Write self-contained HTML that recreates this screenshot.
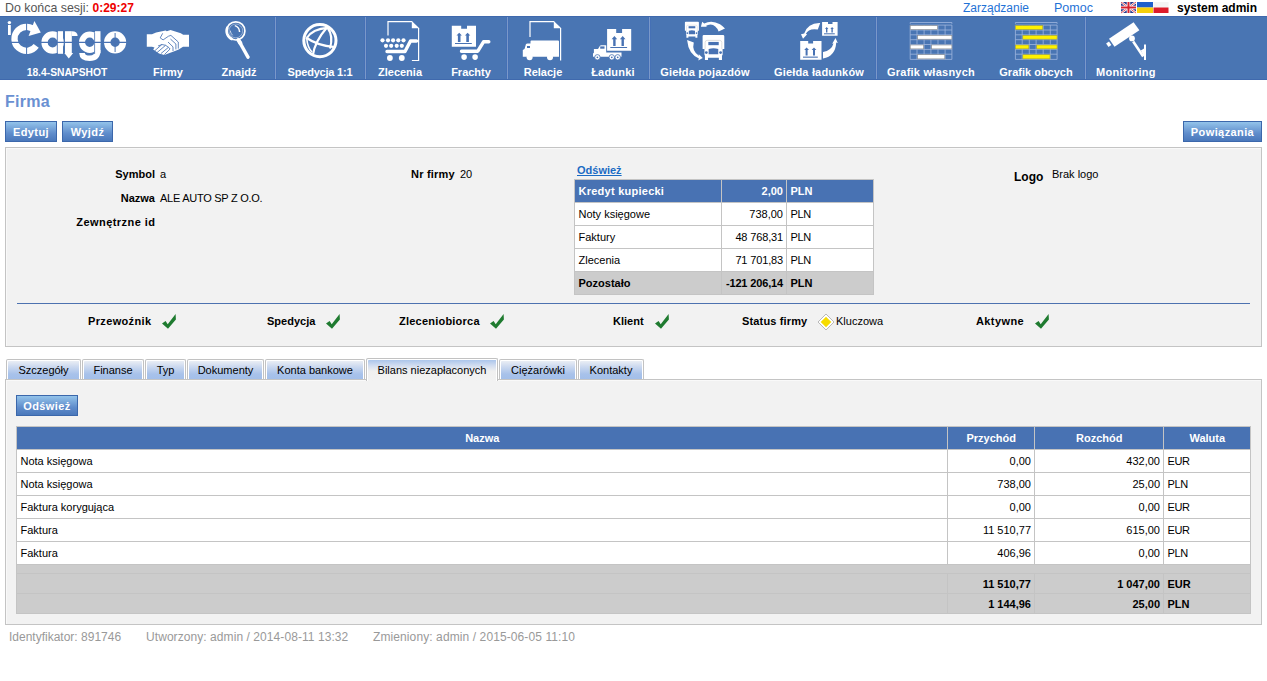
<!DOCTYPE html>
<html><head><meta charset="utf-8"><title>Firma</title>
<style>
*{box-sizing:border-box}
html,body{margin:0;padding:0;background:#fff;width:1267px;height:681px;overflow:hidden;position:relative;font-family:"Liberation Sans",sans-serif;color:#000}
.a{position:absolute;white-space:nowrap;line-height:13px}
.b{font-weight:bold}
.f11{font-size:11px}
.f12{font-size:12px}
#nav{position:absolute;left:0;top:16px;width:1267px;height:64px;background:#4975b3;box-shadow:inset 0 1px 0 #3f69ad,inset 0 -1px 0 #3f69ad}
.sep{position:absolute;top:1px;width:1px;height:62px;background:#7a98c9;box-shadow:-1px 0 0 #4570b5,1px 0 0 #4570b5}
.lbl{position:absolute;top:50px;width:140px;text-align:center;color:#fff;font-weight:bold;font-size:11px;line-height:13px;white-space:nowrap}
.btn{position:absolute;height:21px;letter-spacing:0.4px;border:1px solid #3b67ab;background:linear-gradient(#93c3ea,#5f8ccb 60%,#4a78bb);color:#fff;font-weight:bold;font-size:11px;line-height:19px;padding-top:1px;text-align:center;white-space:nowrap}
.panel{position:absolute;background:#f2f2f2;border:1px solid #c4c4c4;box-shadow:inset 1px 1px 0 #f9f9f9}
table{border-collapse:collapse;position:absolute;font-size:11px}
td,th{border:1px solid #c4c4c4;padding:0 3px 0 3.5px;height:23px;white-space:nowrap}
th{background:#4872b3;color:#fff;font-weight:bold}
.r{text-align:right}
.tab{position:absolute;top:359px;height:21px;border:1px solid #c2c2c2;border-bottom:none;border-radius:2px 2px 0 0;background:linear-gradient(#eff1f5,#cad8ef 35%,#a8c2ea 70%,#a2bee9);box-shadow:inset 1px 1px 0 #fff,inset -1px 0 0 #fff;font-size:11px;line-height:20px;text-align:center;color:#000}
.tab.act{top:358px;height:23px;line-height:22px;background:linear-gradient(#a4c1ea,#d2ddf0 30%,#f0f0f0 55%,#f2f2f2);box-shadow:inset 1px 1px 0 #fff,inset -1px 0 0 #fff;z-index:2}
.cur{letter-spacing:-0.4px}
.sum td{height:20px;background:#cccccc;font-weight:bold}
.chk{position:absolute}
</style></head><body>

<!-- top bar -->
<div class="a" style="left:5px;top:0px;font-size:12.4px;line-height:16px;color:#555">Do końca sesji: <span style="color:#e00;font-weight:bold;font-size:12px">0:29:27</span></div>
<div class="a f12" style="left:963px;top:0px;line-height:16px;color:#1f72d6">Zarządzanie</div>
<div class="a f12" style="left:1054px;top:0px;line-height:16px;color:#1f72d6;font-size:12.5px">Pomoc</div>
<div class="a f12 b" style="left:1177px;top:0px;line-height:16px;color:#000">system admin</div>
<svg style="position:absolute;left:1121px;top:2px" width="48" height="12" viewBox="0 0 48 12">
  <g>
    <rect x="0" y="0" width="15" height="11" fill="#2b3a8c"/>
    <path d="M0 0L15 11M15 0L0 11" stroke="#fff" stroke-width="2.2"/>
    <path d="M0 0L15 11M15 0L0 11" stroke="#d7222f" stroke-width="0.8"/>
    <path d="M7.5 0V11M0 5.5H15" stroke="#fff" stroke-width="3.5"/>
    <path d="M7.5 0V11M0 5.5H15" stroke="#d7222f" stroke-width="2"/>
  </g>
  <rect x="16" y="0" width="16" height="5.5" fill="#1e5fcc"/>
  <rect x="16" y="5.5" width="16" height="5.5" fill="#f6cf0a"/>
  <rect x="32.5" y="0" width="15" height="5.5" fill="#f4f4f4"/>
  <rect x="32.5" y="5.5" width="15" height="5.5" fill="#dc1c2a"/>
</svg>

<!-- nav -->
<div id="nav">
  <div class="sep" style="left:275px"></div>
  <div class="sep" style="left:365px"></div>
  <div class="sep" style="left:507px"></div>
  <div class="sep" style="left:649px"></div>
  <div class="sep" style="left:876px"></div>
  <div class="sep" style="left:1085px"></div>
  <div class="lbl" style="left:-3px;font-size:10.3px">18.4-SNAPSHOT</div>
  <div class="lbl" style="left:98px">Firmy</div>
  <div class="lbl" style="left:169px">Znajdź</div>
  <div class="lbl" style="left:250px;letter-spacing:-0.2px">Spedycja 1:1</div>
  <div class="lbl" style="left:330px">Zlecenia</div>
  <div class="lbl" style="left:401px">Frachty</div>
  <div class="lbl" style="left:473px">Relacje</div>
  <div class="lbl" style="left:543px;letter-spacing:0.2px">Ładunki</div>
  <div class="lbl" style="left:635px;letter-spacing:0.17px">Giełda pojazdów</div>
  <div class="lbl" style="left:749px;letter-spacing:0.18px">Giełda ładunków</div>
  <div class="lbl" style="left:861px;letter-spacing:0.25px">Grafik własnych</div>
  <div class="lbl" style="left:966px">Grafik obcych</div>
  <div class="lbl" style="left:1056px;letter-spacing:0.3px">Monitoring</div>
  <svg id="icons" style="position:absolute;left:0;top:0" width="1267" height="64" viewBox="0 16 1267 64">
  <g fill="#fff">
<!-- logo -->
<circle cx="9.4" cy="22.6" r="1.7"/>
<rect x="8" y="25" width="2.8" height="10"/>
<path d="M35.69 31.14 A12 12 0 1 0 36.21 45.90" fill="none" stroke="#fff" stroke-width="6.3"/>
<path d="M34.4 21 L40.8 32.6 L28.6 35.9 Z"/>
<path d="M52.6 42.5 m-8.05 0 a8.05 8.05 0 1 0 16.1 0 a8.05 8.05 0 1 0 -16.1 0" fill="none" stroke="#fff" stroke-width="6.3"/>
<rect x="57.6" y="31.2" width="5.4" height="22.6"/>
<rect x="65" y="31.2" width="6.8" height="22.8"/>
<path d="M64.4 53 L73.2 53 L68.8 58.4 Z"/>
<path d="M71.8 31.2 Q77.6 31.2 77.6 36 L71.8 36 Z"/>
<circle cx="89.7" cy="42.2" r="7.7" fill="none" stroke="#fff" stroke-width="6"/>
<rect x="95" y="31.2" width="5.5" height="22"/>
<path d="M79.2 53 Q79.5 61 89.7 61 Q100.5 61 100.5 50 L95 50 Q95 55.6 89.7 55.6 Q85.2 55.6 84.8 53 Z"/>
<circle cx="115.1" cy="42.3" r="7.9" fill="none" stroke="#fff" stroke-width="6.4"/>
<g stroke="#4872b3" fill="none">
<path d="M26.6 23 V54.5" stroke-width="1"/>
<path d="M57.3 30 V54.5" stroke-width="0.9"/>
<path d="M94.6 33 V54" stroke-width="0.8"/>
<path d="M115.1 33 V52" stroke-width="1"/>
<path d="M11 42.3 H126.8" stroke-width="1.3"/>
</g>
</g>

<!-- handshake -->
<g transform="translate(142,24)">
<path fill="#fff" d="M4.8 10.3 H10 L14.1 8.5 L23.6 6.5 L24.8 7.2 L28.5 6.1 L38.8 9.3 L41.2 10.8 H47 V22.7 H41 L36.7 25.4 L33 27 L22.3 31 L17 29.5 L11.2 25.4 L12.5 23.6 L10 22.7 H4.8 Z"/>
<g fill="none" stroke="#4872b3" stroke-width="0.85">
<path d="M20.7 9.3 L18.2 13.9 L21.1 15.9 L26.5 12.2 L28.9 11.4"/>
<path d="M28.9 11.4 L36.3 18 V24.6"/>
<path d="M28.5 15.1 L33.9 20 V25.4"/>
<path d="M26 18 L31 22.9 V27"/>
<path d="M16 22 L19.9 20.5 L12.5 27"/>
<path d="M19.9 20.5 L23.6 21.3 L14.9 28.7"/>
<path d="M23.6 21.3 L26.5 23.3 L19 29.5"/>
<path d="M26.5 23.3 L28.1 25 L22.3 30.7"/>
</g>
</g>

<!-- magnifier -->
<g transform="translate(218,18)" fill="none" stroke="#fff">
<circle cx="17.8" cy="12.9" r="9.1" stroke-width="1.7"/>
<path d="M14.5 21.4 A9 9 0 0 1 9.6 9" stroke-width="2.6"/>
<circle cx="17.8" cy="12.9" r="6.9" stroke-width="0.6" opacity="0.7"/>
<path d="M16.8 7.6 Q21.3 8.8 21.6 14" stroke-width="1.5"/>
<path d="M12.2 12.5 Q12.6 15.5 14.6 17.3" stroke-width="0.7"/>
<path d="M20.3 22 L22.4 25.2" stroke-width="4" stroke-linecap="round"/>
<path d="M21.5 24 L30 39.2" stroke-width="3.4" stroke-linecap="round"/>
</g>

<!-- globe -->
<g transform="translate(296,18)" fill="none" stroke="#fff" stroke-width="2.2">
<circle cx="23.9" cy="22.6" r="16.1" stroke-width="3"/>
<path d="M31.7 8.5 Q18.35 24 16.8 37.5"/>
<path d="M31.5 9.5 Q37.6 18 34 30.5"/>
<path d="M10 19.5 Q21 27.5 38.8 29.2"/>
<path d="M11.2 19.5 Q16.5 11 31.7 9.8"/>
<path d="M10.8 21 Q11.5 29.5 16 34" stroke-width="1.6"/>
</g>

<!-- zlecenia -->
<g transform="translate(376,18)">
<path d="M12 17.5 V3.6 H36.2 M42.6 10 V42.5 H35.9" fill="none" stroke="#fff" stroke-width="1.2"/>
<path d="M35.8 3 L43.3 10.3 L35.8 10.3 Z" fill="#fff"/>
<g fill="#fff">
<circle cx="6.5" cy="22.3" r="2.1"/><circle cx="12" cy="22.3" r="2.1"/><circle cx="17.1" cy="22.3" r="2.1"/><circle cx="22.3" cy="22.3" r="2.1"/><circle cx="27.5" cy="22.3" r="2.1"/>
<circle cx="10" cy="27.8" r="2.1"/><circle cx="15.2" cy="27.8" r="2.1"/><circle cx="20.7" cy="27.8" r="2.1"/><circle cx="25.8" cy="27.8" r="2.1"/>
<circle cx="13.9" cy="40" r="2.9"/><circle cx="25.8" cy="40" r="2.9"/>
</g>
<path d="M11 33.5 H29 L34.5 23 H40.5" fill="none" stroke="#fff" stroke-width="3.4" stroke-linecap="round" stroke-linejoin="round"/>
</g>

<!-- frachty -->
<g transform="translate(446,18)">
<path fill="#fff" d="M5.8 7.8 H15.2 V10.7 H21 V7.8 H30 V28.7 H5.8 Z"/>
<g fill="#4872b3">
<path d="M11.9 23.9 V17.6 H10.5 L13.2 14.8 L15.9 17.6 H14.5 V23.9 Z"/>
<path d="M20.3 23.9 V17.6 H18.9 L21.6 14.8 L24.3 17.6 H22.9 V23.9 Z"/>
<rect x="9" y="25" width="16.8" height="1"/>
</g>
<path d="M15.5 33.2 H31.8 L37.5 23.8 H42.8" fill="none" stroke="#fff" stroke-width="3.4" stroke-linecap="round" stroke-linejoin="round"/>
<circle cx="18.1" cy="39.1" r="2.8" fill="#fff"/><circle cx="29.1" cy="39.1" r="2.8" fill="#fff"/>
</g>

<!-- relacje -->
<g transform="translate(518,18)">
<path d="M12 19 V3.6 H36.2 M42.6 10 V42.5" fill="none" stroke="#fff" stroke-width="1.2"/>
<path d="M35.8 3 L43.3 10.3 L35.8 10.3 Z" fill="#fff"/>
<path fill="#fff" d="M12.5 23.5 Q12.5 22.6 13.5 22.6 H40 Q41 22.6 41 23.6 V38.8 H4.8 V32 L6.5 31 L8 26 Q8.5 25.5 9.5 25.5 H12.5 Z"/>
<rect x="9" y="28" width="3" height="2" fill="#4872b3"/>
<circle cx="11.6" cy="39.2" r="3" fill="#fff"/><circle cx="32" cy="39.2" r="3" fill="#fff"/>
</g>

<!-- ladunki -->
<g transform="translate(588,22)">
<path fill="#fff" d="M19.1 7 H28.2 V10.9 H34.1 V7 H43.2 V28.8 H19.1 Z"/>
<g fill="#4872b3">
<path d="M25.2 24.1 V17.3 H23.6 L26.4 14.1 L29.2 17.3 H27.6 V24.1 Z"/>
<path d="M33.5 24.1 V17.3 H31.9 L34.7 14.1 L37.5 17.3 H35.9 V24.1 Z"/>
<rect x="22.3" y="25" width="16.8" height="1"/>
</g>
<path fill="#fff" d="M5.9 27 H10 L12 23.8 Q12.4 23.2 13.2 23.2 H18.2 V30.5 H33.5 V34.7 H5 V31.5 L5.9 30.8 Z"/>
<rect x="12.2" y="24.4" width="4.3" height="2.3" fill="#4872b3"/>
<g fill="#fff" stroke="#4872b3" stroke-width="0.8">
<circle cx="9.4" cy="35.3" r="2.7"/><circle cx="23.8" cy="35.3" r="2.7"/><circle cx="29.7" cy="35.3" r="2.7"/>
</g>
<g fill="#4872b3"><circle cx="9.4" cy="35.3" r="0.9"/><circle cx="23.8" cy="35.3" r="0.9"/><circle cx="29.7" cy="35.3" r="0.9"/></g>
</g>

<!-- gielda pojazdow -->
<g transform="translate(680,18)">
<g transform="translate(4.9,3.8)"><path fill="#fff" d="M0.8 0 H13.2 Q14 0 14 0.8 V9 H12.9 V13 H12.5 V16 H10.5 V14.6 H3.5 V16 H1.5 V13 H1.2 V9 H0 V0.8 Q0 0 0.8 0 Z"/>
<rect x="3.7" y="4.4" width="6.7" height="2.1" fill="#4872b3"/>
<path d="M3.9 8.9 Q7 8 10.1 8.9 V12.4 H3.9 Z" fill="#4872b3"/>
<circle cx="2.4" cy="11.3" r="0.9" fill="#4872b3"/><circle cx="11.6" cy="11.3" r="0.9" fill="#4872b3"/>
<path d="M1.6 9 V4.8 Q1.6 3.4 3 3.4 H11 Q12.4 3.4 12.4 4.8 V9" fill="none" stroke="#dcdcdc" stroke-width="0.6"/></g>
<g transform="translate(22.6,17.1) scale(1.55)"><path fill="#fff" d="M0.8 0 H13.2 Q14 0 14 0.8 V9 H12.9 V13 H12.5 V16 H10.5 V14.6 H3.5 V16 H1.5 V13 H1.2 V9 H0 V0.8 Q0 0 0.8 0 Z"/>
<rect x="3.7" y="4.4" width="6.7" height="2.1" fill="#4872b3"/>
<path d="M3.9 8.9 Q7 8 10.1 8.9 V12.4 H3.9 Z" fill="#4872b3"/>
<circle cx="2.4" cy="11.3" r="0.9" fill="#4872b3"/><circle cx="11.6" cy="11.3" r="0.9" fill="#4872b3"/>
<path d="M1.6 9 V4.8 Q1.6 3.4 3 3.4 H11 Q12.4 3.4 12.4 4.8 V9" fill="none" stroke="#dcdcdc" stroke-width="0.6"/></g>
<path fill="#fff" d="M20.9 8.8 L22.2 3.8 L24.2 5.6 Q31.5 1.6 40 6.3 Q43 8.3 45 10.6 L38.6 13.5 Q36 6.8 30.5 6.5 Q27.8 6.6 25.8 7.9 L27.3 8.7 Z"/>
<path fill="#fff" d="M7.1 22.1 L13.8 24.6 Q11.5 33.5 19.2 38 L18.6 36 L22.8 39.9 L18.2 42.6 L18.9 40.4 Q8.5 36.5 7.1 22.1 Z"/>
</g>

<!-- gielda ladunkow -->
<g transform="translate(795,18)">
<path fill="#fff" d="M27.1 3.9 H33 V6.1 H37.5 V3.9 H42.6 V17.8 H27.1 Z"/>
<g fill="#4872b3">
<path d="M31 14.5 V11 H30 L31.7 9 L33.4 11 H32.4 V14.5 Z"/>
<path d="M36.4 14.5 V11 H35.4 L37.1 9 L38.8 11 H37.8 V14.5 Z"/>
<rect x="29" y="15.3" width="10.8" height="1"/>
</g>
<path fill="#fff" d="M5.2 22.9 H13.2 V25.5 H18.1 V22.9 H26.5 V41.7 H5.2 Z"/>
<g fill="#4872b3">
<path d="M10.6 37.5 V32 H9.2 L11.6 29.4 L14 32 H12.6 V37.5 Z"/>
<path d="M18 37.5 V32 H16.6 L19 29.4 L21.4 32 H20 V37.5 Z"/>
<rect x="8" y="38.6" width="14.8" height="1.1"/>
</g>
<path fill="#fff" d="M25.2 5 Q13 4.5 9.2 15.5 L6 16.2 L8 20.8 L12.2 16.2 L10.8 16 Q13.5 10 22.8 11.5 Z"/>
<path fill="#fff" d="M28 34 Q36.5 32.5 38.5 25.5 L37.2 25.8 L40.5 20 L42.8 25 L41.2 24.6 Q40.5 38.5 28 40.5 Z"/>
</g>
<!-- grafik -->
<g transform="translate(905,18)">
<g stroke="#9fb6de" stroke-width="0.8" fill="none">
<path d="M5.2 7.1 V41.4"/>
<path d="M12 7.1 V41.4"/>
<path d="M19.1 7.1 V41.4"/>
<path d="M25.9 7.1 V41.4"/>
<path d="M33 7.1 V41.4"/>
<path d="M40.1 7.1 V41.4"/>
<path d="M46.9 7.1 V41.4"/>
<path d="M5.2 7.1 H46.9"/>
<path d="M5.2 12 H46.9"/>
<path d="M5.2 16.8 H46.9"/>
<path d="M5.2 21.7 H46.9"/>
<path d="M5.2 26.5 H46.9"/>
<path d="M5.2 31.4 H46.9"/>
<path d="M5.2 36.2 H46.9"/>
<path d="M5.2 41.4 H46.9"/>
<path d="M5.2 5.8 V4.5 H46.9 V5.8"/>
</g>
<rect x="5.2" y="7.6" width="27.4" height="4.0" fill="#fff" stroke="#8a8a8a" stroke-width="0.6"/>
<rect x="12.6" y="17.3" width="34.3" height="3.9" fill="#fff" stroke="#8a8a8a" stroke-width="0.6"/>
<rect x="5.2" y="27" width="13.5" height="3.9" fill="#fff" stroke="#8a8a8a" stroke-width="0.6"/>
<rect x="26.5" y="27" width="20.4" height="3.9" fill="#fff" stroke="#8a8a8a" stroke-width="0.6"/>
<rect x="12.6" y="36.7" width="27.2" height="4.2" fill="#fff" stroke="#8a8a8a" stroke-width="0.6"/>
</g>
<g transform="translate(1010.2,18)">
<g stroke="#9fb6de" stroke-width="0.8" fill="none">
<path d="M5.2 7.1 V41.4"/>
<path d="M12 7.1 V41.4"/>
<path d="M19.1 7.1 V41.4"/>
<path d="M25.9 7.1 V41.4"/>
<path d="M33 7.1 V41.4"/>
<path d="M40.1 7.1 V41.4"/>
<path d="M46.9 7.1 V41.4"/>
<path d="M5.2 7.1 H46.9"/>
<path d="M5.2 12 H46.9"/>
<path d="M5.2 16.8 H46.9"/>
<path d="M5.2 21.7 H46.9"/>
<path d="M5.2 26.5 H46.9"/>
<path d="M5.2 31.4 H46.9"/>
<path d="M5.2 36.2 H46.9"/>
<path d="M5.2 41.4 H46.9"/>
<path d="M5.2 5.8 V4.5 H46.9 V5.8"/>
</g>
<rect x="5.2" y="7.6" width="27.4" height="4.0" fill="#fff200" stroke="#a0a040" stroke-width="0.6"/>
<rect x="12.6" y="17.3" width="34.3" height="3.9" fill="#fff200" stroke="#a0a040" stroke-width="0.6"/>
<rect x="5.2" y="27" width="13.5" height="3.9" fill="#fff200" stroke="#a0a040" stroke-width="0.6"/>
<rect x="26.5" y="27" width="20.4" height="3.9" fill="#fff200" stroke="#a0a040" stroke-width="0.6"/>
<rect x="12.6" y="36.7" width="27.2" height="4.2" fill="#fff200" stroke="#a0a040" stroke-width="0.6"/>
</g>

<!-- monitoring -->
<g transform="translate(1100,18)" fill="#fff">
<path d="M9 20.7 L33.6 4.2 L39.4 12.3 L14.5 28.8 Z"/>
<path d="M6.1 25.5 L9 23.4 L11.4 27 L8.5 29 Z"/>
<circle cx="32" cy="20.4" r="2.9"/>
<path d="M33.2 23.5 L43.2 38.5" stroke="#fff" stroke-width="2.6"/>
<path d="M44 26.5 H46 V42 H44 V38.5 L40.8 32.5 L44 30.5 Z"/>
</g>

  </svg>
</div>

<!-- title -->
<div class="a b" style="left:5px;top:93px;letter-spacing:0.25px;font-size:16px;line-height:18px;color:#6a90d2">Firma</div>
<div class="btn" style="left:5px;top:121px;width:52px">Edytuj</div>
<div class="btn" style="left:62px;top:121px;width:51px">Wyjdź</div>
<div class="btn" style="left:1183px;top:121px;width:79px">Powiązania</div>

<!-- main panel -->
<div class="panel" style="left:5px;top:147px;width:1257px;height:200px"></div>
<div class="a f11 b" style="left:95px;top:168px;width:60px;text-align:right">Symbol</div>
<div class="a f11" style="left:160px;top:168px">a</div>
<div class="a f11 b" style="left:95px;top:192px;width:60px;text-align:right">Nazwa</div>
<div class="a f11" style="left:160px;top:192px;letter-spacing:-0.27px">ALE AUTO SP Z O.O.</div>
<div class="a f11 b" style="left:55px;top:216px;width:100px;text-align:right;letter-spacing:0.45px;margin-left:0.45px">Zewnętrzne id</div>
<div class="a f11 b" style="left:411px;top:168px;letter-spacing:0.2px">Nr firmy</div>
<div class="a f11" style="left:460px;top:168px">20</div>
<div class="a f11 b" style="left:577px;top:164px;color:#1a6bc4;text-decoration:underline">Odśwież</div>
<table style="left:574px;top:179px;width:300px;table-layout:fixed">
<tr><th style="text-align:left;width:147px;letter-spacing:0.25px">Kredyt kupiecki</th><th class="r" style="width:65px">2,00</th><th style="text-align:left;width:87px">PLN</th></tr>
<tr style="background:#fff"><td>Noty księgowe</td><td class="r">738,00</td><td class="cur">PLN</td></tr>
<tr style="background:#fff"><td>Faktury</td><td class="r" style="letter-spacing:-0.15px">48 768,31</td><td class="cur">PLN</td></tr>
<tr style="background:#fff"><td>Zlecenia</td><td class="r" style="letter-spacing:-0.15px">71 701,83</td><td class="cur">PLN</td></tr>
<tr style="background:#cccccc;font-weight:bold"><td>Pozostało</td><td class="r" style="letter-spacing:-0.15px">-121 206,14</td><td>PLN</td></tr>
</table>
<div class="a f11 b" style="left:1014px;top:171px;font-size:12px">Logo</div>
<div class="a f11" style="left:1052px;top:168px">Brak logo</div>

<div style="position:absolute;left:17px;top:303px;width:1233px;height:1px;background:#4d72b0"></div>
<div class="a f11 b" style="left:88px;top:315px;letter-spacing:0.35px">Przewoźnik</div>
<div class="a f11 b" style="left:267px;top:315px">Spedycja</div>
<div class="a f11 b" style="left:399px;top:315px;letter-spacing:0.22px">Zleceniobiorca</div>
<div class="a f11 b" style="left:613px;top:315px">Klient</div>
<div class="a f11 b" style="left:742px;top:315px;letter-spacing:0.15px">Status firmy</div>
<div class="a f11" style="left:836px;top:315px">Kluczowa</div>
<div class="a f11 b" style="left:976px;top:315px;letter-spacing:0.4px">Aktywne</div>
<svg class="chk" style="left:158px;top:310px" width="22" height="22" viewBox="0 0 22 22"><path d="M4 13.4 L7.6 11 L9.7 14.2 L17.6 4 L17.9 9.4 L10 18.7 Z" fill="#1f7b30"/></svg>
<svg class="chk" style="left:322px;top:310px" width="22" height="22" viewBox="0 0 22 22"><path d="M4 13.4 L7.6 11 L9.7 14.2 L17.6 4 L17.9 9.4 L10 18.7 Z" fill="#1f7b30"/></svg>
<svg class="chk" style="left:486px;top:310px" width="22" height="22" viewBox="0 0 22 22"><path d="M4 13.4 L7.6 11 L9.7 14.2 L17.6 4 L17.9 9.4 L10 18.7 Z" fill="#1f7b30"/></svg>
<svg class="chk" style="left:650.5px;top:310px" width="22" height="22" viewBox="0 0 22 22"><path d="M4 13.4 L7.6 11 L9.7 14.2 L17.6 4 L17.9 9.4 L10 18.7 Z" fill="#1f7b30"/></svg>
<svg class="chk" style="left:1031px;top:310px" width="22" height="22" viewBox="0 0 22 22"><path d="M4 13.4 L7.6 11 L9.7 14.2 L17.6 4 L17.9 9.4 L10 18.7 Z" fill="#1f7b30"/></svg>
<svg style="position:absolute;left:816px;top:312px" width="20" height="20" viewBox="0 0 20 20"><path d="M10 2 L18 10 L10 18 L2 10 Z" fill="#fff" stroke="#a8a8a8" stroke-width="0.8"/><path d="M10 4.7 L15.3 10 L10 15.3 L4.7 10 Z" fill="#f7dc00"/></svg>

<!-- tabs -->
<div class="tab" style="left:6px;width:75px">Szczegóły</div>
<div class="tab" style="left:82px;width:62px">Finanse</div>
<div class="tab" style="left:145px;width:41px">Typ</div>
<div class="tab" style="left:187px;width:77px">Dokumenty</div>
<div class="tab" style="left:265px;width:100px">Konta bankowe</div>
<div class="tab act" style="left:366px;width:132px">Bilans niezapłaconych</div>
<div class="tab" style="left:499px;width:78px">Ciężarówki</div>
<div class="tab" style="left:578px;width:66px">Kontakty</div>

<div class="panel" style="left:5px;top:379px;width:1257px;height:246px"></div>
<div class="btn" style="left:16px;top:395px;width:62px">Odśwież</div>
<table style="left:16px;top:426px;width:1235px">
<tr><th style="width:931px">Nazwa</th><th style="width:87px">Przychód</th><th style="width:129px">Rozchód</th><th>Waluta</th></tr>
<tr style="background:#fff"><td>Nota księgowa</td><td class="r">0,00</td><td class="r">432,00</td><td class="cur">EUR</td></tr>
<tr style="background:#fff"><td>Nota księgowa</td><td class="r">738,00</td><td class="r">25,00</td><td class="cur">PLN</td></tr>
<tr style="background:#fff"><td>Faktura korygująca</td><td class="r">0,00</td><td class="r">0,00</td><td class="cur">EUR</td></tr>
<tr style="background:#fff"><td>Faktura</td><td class="r">11 510,77</td><td class="r">615,00</td><td class="cur">EUR</td></tr>
<tr style="background:#fff"><td>Faktura</td><td class="r">406,96</td><td class="r">0,00</td><td class="cur">PLN</td></tr>
<tr style="background:#cccccc"><td colspan="4" style="height:9px"></td></tr>
<tr class="sum"><td></td><td class="r">11 510,77</td><td class="r">1 047,00</td><td>EUR</td></tr>
<tr class="sum"><td></td><td class="r">1 144,96</td><td class="r">25,00</td><td>PLN</td></tr>
</table>

<!-- footer -->
<div class="a f12" style="left:9px;top:631px;color:#999">Identyfikator: 891746</div>
<div class="a f12" style="left:146px;top:631px;color:#999;letter-spacing:0.07px">Utworzony: admin / 2014-08-11 13:32</div>
<div class="a f12" style="left:373px;top:631px;color:#999;letter-spacing:0.1px">Zmieniony: admin / 2015-06-05 11:10</div>

</body></html>
